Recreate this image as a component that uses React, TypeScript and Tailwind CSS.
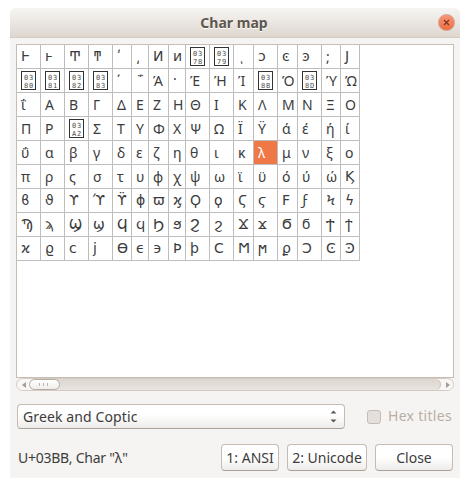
import React from 'react';

const ROW_STARTS = [0x370, 0x380, 0x390, 0x3a0, 0x3b0, 0x3c0, 0x3d0, 0x3e0, 0x3f0];

const UNASSIGNED = [0x378, 0x379, 0x380, 0x381, 0x382, 0x383, 0x38b, 0x38d, 0x3a2];
const SELECTED = 0x3bb;

const isArchaic = (code: number) => code < 0x37e || code === 0x37f || code >= 0x3cf;

function MissingGlyph({ code }: { code: number }) {
  const hex = code.toString(16).toUpperCase().padStart(4, '0');
  return (
    <span className="mt-[2px] flex h-[19px] w-[15px] shrink-0 flex-col self-start border border-[#333] pt-[2px] pl-[2px] font-['DejaVu_Sans_Mono',monospace] text-[7px] leading-[8px] tracking-[0.8px] text-[#4c4c4c]">
      <span className="h-[8px] whitespace-nowrap">{hex.slice(0, 2)}</span>
      <span className="h-[8px] whitespace-nowrap">{hex.slice(2)}</span>
    </span>
  );
}

function Cell({ code }: { code: number }) {
  const selected = code === SELECTED;
  return (
    <div
      className={
        'flex items-center overflow-hidden border-r border-b border-[#bdbdbd] text-[14px] leading-[23px] ' +
        (selected ? 'bg-[#f07746] text-white ' : 'text-[#3c3c3c] ') +
        (isArchaic(code) ? "pl-[4px] font-['DejaVu_Sans',sans-serif]" : 'pl-[4px]')
      }
    >
      {UNASSIGNED.includes(code) ? <MissingGlyph code={code} /> : <span>{String.fromCharCode(code)}</span>}
    </div>
  );
}

function CharGrid() {
  return (
    <div className="grid w-[343px] auto-rows-[24px] grid-cols-[24px_24px_24px_24px_19px_17px_20px_17px_24px_24px_20px_24px_20px_24px_19px_19px]">
      {ROW_STARTS.flatMap((start) =>
        Array.from({ length: 16 }, (_, i) => <Cell key={start + i} code={start + i} />),
      )}
    </div>
  );
}

function ScrollBar() {
  return (
    <div className="flex h-[13px] w-[438px] items-stretch overflow-hidden rounded-full border border-[#d3cbc4] bg-linear-to-b from-[#ddd6d0] to-[#ebe6e2]">
      <div className="flex w-[20px] items-center bg-[#f8f7f5] pl-[5px]">
        <svg width="4" height="6" viewBox="0 0 4 6"><path d="M4 0v6L0 3z" fill="#a29d98" /></svg>
      </div>
      <div className="-ml-[8px] flex w-[31px] items-center justify-center gap-[3px] rounded-full border border-[#b5aaa0] bg-linear-to-b from-white to-[#f0eeeb] pr-[2px]">
        <span className="h-[3px] w-px bg-[#bbb4ae]" />
        <span className="h-[3px] w-px bg-[#bbb4ae]" />
        <span className="h-[3px] w-px bg-[#bbb4ae]" />
      </div>
      <div className="flex flex-1 bg-[#f8f7f5]">
        <div className="w-[381px] rounded-r-full border-r border-[#c8beb5] bg-linear-to-b from-[#ddd6d0] to-[#e9e4e0]" />
        <div className="flex items-center pl-[5px]">
          <svg width="4" height="6" viewBox="0 0 4 6"><path d="M0 0v6l4-3z" fill="#a29d98" /></svg>
        </div>
      </div>
    </div>
  );
}

function Button({ className, children }: { className: string; children: React.ReactNode }) {
  return (
    <button
      className={
        'flex h-[27px] items-center justify-center rounded-[4px] border border-[#c5bcb3] border-b-[#aca198] bg-linear-to-b from-white from-50% to-[#eeecea] whitespace-nowrap ' +
        className
      }
    >
      {children}
    </button>
  );
}

export default function App() {
  return (
    <div className="h-[488px] w-[470px] bg-white px-[10px] pt-[8px] font-['Noto_Sans','Open_Sans',sans-serif] text-[14px] leading-[20px] text-[#3c3c3c]">
      <div className="flex h-[470px] w-[450px] flex-col overflow-hidden rounded-t-[6px] bg-[#f5f4f2]">
        <header className="flex h-[30px] shrink-0 items-center border-b border-[#d5cbc2] bg-linear-to-b from-[#f6f5f2] to-[#dfd7d0] pr-[5px] pl-[20px]">
          <h1 className="flex-1 text-center text-[14px] font-bold text-[#5e564f]">
            <span className="[text-shadow:0_1px_0_#fff]">Char map</span>
          </h1>
          <span className="flex size-[17px] items-center justify-center rounded-full border border-[#cfa292] bg-linear-to-b from-[#f6967a] to-[#ee6c3d]">
            <svg width="7" height="7" viewBox="0 0 7 7"><path d="M1 1l5 5M6 1L1 6" stroke="#753321" strokeWidth="1.1" /></svg>
          </span>
        </header>

        <main className="flex flex-col pt-[6px] pl-[6px]">
          <section className="h-[334px] w-[438px] border border-[#c7bdb2] bg-white">
            <CharGrid />
          </section>
          <ScrollBar />

          <div className="mt-[13px] ml-[1px] flex h-[25px] items-center">
            <div className="flex h-[25px] w-[328px] items-center justify-between rounded-[4px] border border-[#c5bcb3] border-b-[#aca198] bg-linear-to-b from-white from-40% to-[#eeecea] pr-[7px] pl-[5px]">
              <span className="tracking-[0.12px]">Greek and Coptic</span>
              <svg width="7" height="13" viewBox="0 0 7 13">
                <path d="M.5 3.5h6L3.5 .5zM.5 9.5h6L3.5 12.5z" fill="#5d5854" />
              </svg>
            </div>
            <span className="ml-[22px] size-[14px] rounded-[3px] border border-[#c7bcb2] bg-[#e4dfda]" />
            <span className="ml-[7px] pb-px tracking-[0.3px] text-[#b8aea5]">Hex titles</span>
          </div>

          <div className="mt-[15px] flex h-[27px] items-center pl-[2px]">
            <span className="w-[203px] tracking-[-0.25px] whitespace-nowrap">U+03BB, Char "λ"</span>
            <Button className="w-[58px]">1: ANSI</Button>
            <Button className="ml-[8px] w-[80px]">2: Unicode</Button>
            <Button className="ml-[8px] w-[78px]">Close</Button>
          </div>
        </main>
      </div>
    </div>
  );
}
